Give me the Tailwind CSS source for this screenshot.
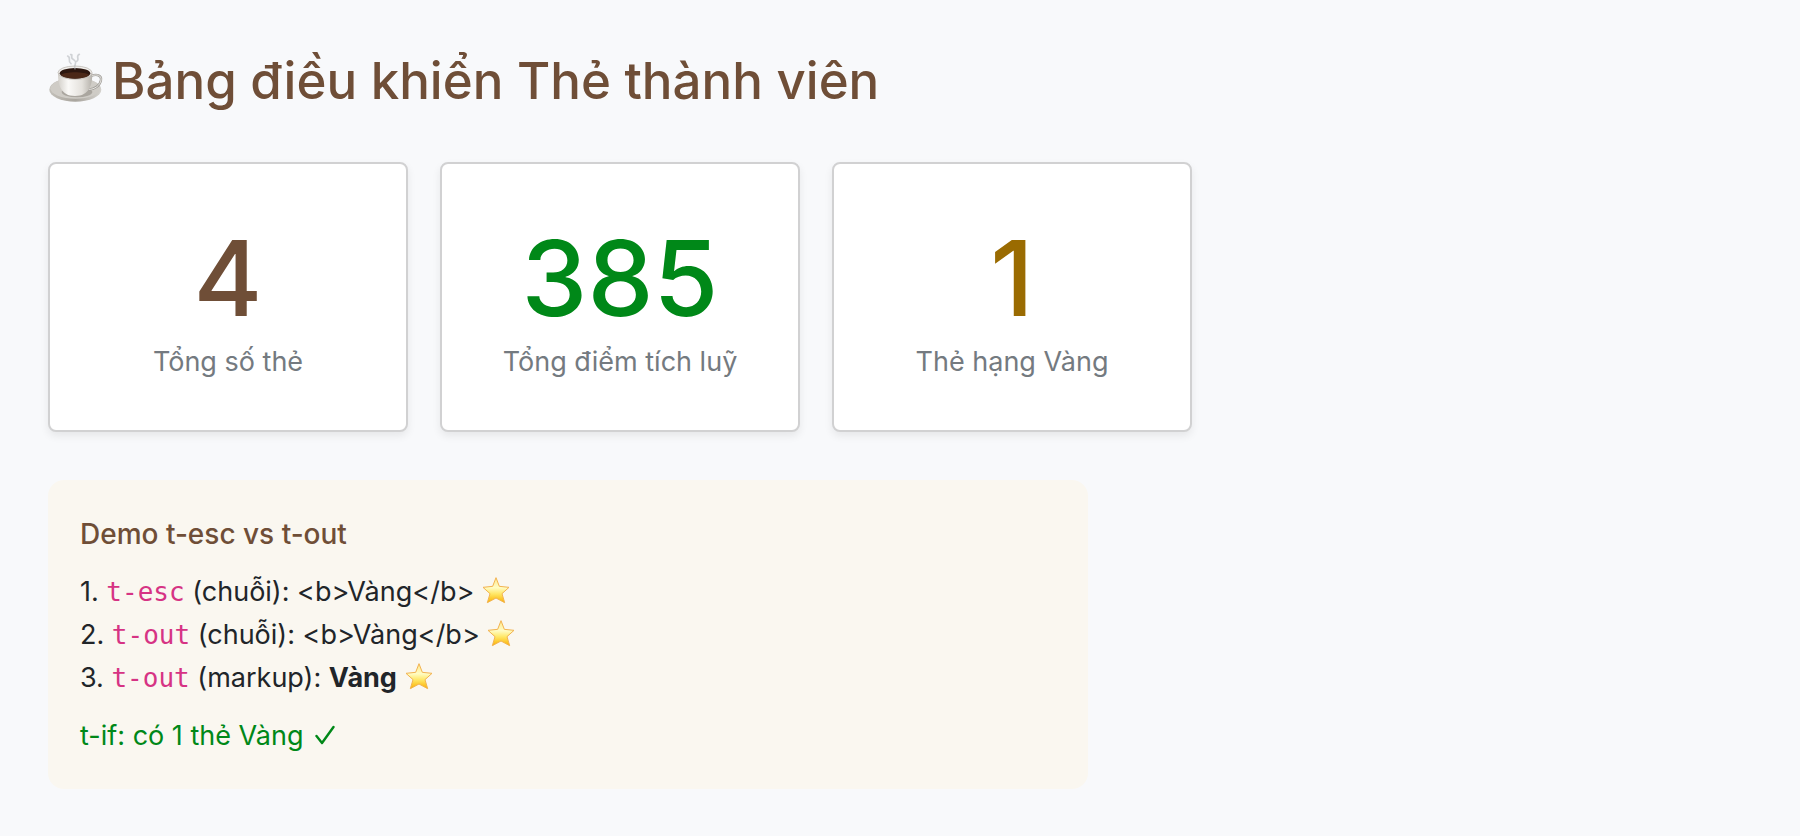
<!DOCTYPE html>
<html lang="vi">
<head>
  <meta charset="UTF-8">
  <meta name="viewport" content="width=device-width, initial-scale=1.0">
  <title>Bảng điều khiển Thẻ thành viên</title>
  <script src="https://cdn.jsdelivr.net/npm/@tailwindcss/browser@4"></script>
</head>
<body class="min-h-screen bg-[#f8f9fb] p-12 font-['Inter','Noto_Sans',sans-serif] text-[27px] text-[#212529]">

  <!-- Shared symbols -->
  <svg class="absolute h-0 w-0" aria-hidden="true">
    <defs>
      <linearGradient id="starFill" x1="0" y1="0" x2="0" y2="1">
        <stop offset="0" stop-color="#ffe88a" />
        <stop offset="0.4" stop-color="#fffcc4" />
        <stop offset="0.65" stop-color="#ffe765" />
        <stop offset="1" stop-color="#fbb000" />
      </linearGradient>
    </defs>
    <symbol id="star" viewBox="0 0 84 84">
      <path d="M42 5 L52 31 L81 34 L60 53 L68 80 L42 66 L16 80 L24 53 L3 34 L32 31 Z" fill="url(#starFill)" stroke="#f2b350" stroke-width="3" stroke-linejoin="round" />
    </symbol>
  </svg>

  <header class="mb-12">
    <h1 class="flex items-center gap-2 text-[51px] leading-[66px] font-medium text-[#6f4e37]">
      <svg class="h-14 w-14 shrink-0" viewBox="53 37 168 168" role="img" aria-label="Cà phê">
        <defs>
          <linearGradient id="cupBody" x1="0" y1="0" x2="1" y2="0">
            <stop offset="0" stop-color="#d3d0ca" />
            <stop offset="0.3" stop-color="#faf9f7" />
            <stop offset="0.7" stop-color="#e4e1dc" />
            <stop offset="1" stop-color="#b5b1aa" />
          </linearGradient>
          <linearGradient id="saucer" x1="0" y1="0" x2="1" y2="0">
            <stop offset="0" stop-color="#c3c0b9" />
            <stop offset="0.5" stop-color="#a9a59e" />
            <stop offset="1" stop-color="#d5d3ce" />
          </linearGradient>
        </defs>
        <ellipse cx="135" cy="147" rx="78" ry="36" fill="url(#saucer)" />
        <ellipse cx="135" cy="143" rx="75" ry="31" fill="#cfccc6" />
        <ellipse cx="140" cy="154" rx="46" ry="16" fill="#aaa69f" />
        <path d="M182 106 C200 99 214 104 212 118 C210 134 192 147 175 146" fill="none" stroke="#a19e99" stroke-width="7" />
        <path d="M182 106 C200 99 214 104 212 118 C210 134 192 147 175 146" fill="none" stroke="#e8e6e2" stroke-width="3" />
        <path d="M83 97 C83 132 91 166 134 166 C177 166 186 132 186 97 Z" fill="url(#cupBody)" />
        <ellipse cx="134" cy="96" rx="51" ry="20" fill="#f1efec" stroke="#b3afa8" stroke-width="2" />
        <ellipse cx="134" cy="98" rx="46" ry="16" fill="#2c1710" />
        <path d="M92 103 C103 92 165 92 176 103 C165 117 103 117 92 103 Z" fill="#4b2818" />
        <path d="M134 84 C129 70 145 66 128 56 C118 50 130 40 121 42 M122 69 C110 60 124 51 112 46 M139 62 C150 55 134 48 147 41" fill="none" stroke="#b5b9be" stroke-opacity="0.6" stroke-width="5" stroke-linecap="round" />
      </svg>
      Bảng điều khiển Thẻ thành viên
    </h1>
  </header>

  <main>
    <section class="mb-12 grid max-w-[1144px] grid-cols-3 gap-8 text-center">
      <div class="rounded-lg border-2 border-[#d1d1d2] bg-white px-4 pt-12 pb-[50px] shadow-[0_4px_8px_rgba(0,0,0,0.075)]">
        <div class="text-[105px] leading-[132px] font-medium text-[#6f4e37]">4</div>
        <div class="leading-9 text-[#747a80]">Tổng số thẻ</div>
      </div>
      <div class="rounded-lg border-2 border-[#d1d1d2] bg-white px-4 pt-12 pb-[50px] shadow-[0_4px_8px_rgba(0,0,0,0.075)]">
        <div class="text-[105px] leading-[132px] font-medium text-[#008818]">385</div>
        <div class="leading-9 text-[#747a80]">Tổng điểm tích luỹ</div>
      </div>
      <div class="rounded-lg border-2 border-[#d1d1d2] bg-white px-4 pt-12 pb-[50px] shadow-[0_4px_8px_rgba(0,0,0,0.075)]">
        <div class="text-[105px] leading-[132px] font-medium text-[#9a6b01]">1</div>
        <div class="leading-9 text-[#747a80]">Thẻ hạng Vàng</div>
      </div>
    </section>

    <section class="max-w-[1040px] rounded-2xl bg-[#faf7f0] p-8">
      <h2 class="mb-[14px] text-[28px] leading-[44px] font-medium text-[#6f4e37]">Demo t-esc vs t-out</h2>
      <div class="leading-[43px]">
        <p>1. <code class="font-['DejaVu_Sans_Mono',monospace] text-[26px] leading-none text-[#d63384]">t-esc</code> (chuỗi): &lt;b&gt;Vàng&lt;/b&gt; <svg class="inline-block h-7 w-7 align-[-3px]" role="img" aria-label="sao"><use href="#star" /></svg></p>
        <p>2. <code class="font-['DejaVu_Sans_Mono',monospace] text-[26px] leading-none text-[#d63384]">t-out</code> (chuỗi): &lt;b&gt;Vàng&lt;/b&gt; <svg class="inline-block h-7 w-7 align-[-3px]" role="img" aria-label="sao"><use href="#star" /></svg></p>
        <p>3. <code class="font-['DejaVu_Sans_Mono',monospace] text-[26px] leading-none text-[#d63384]">t-out</code> (markup): <b>Vàng</b> <svg class="inline-block h-7 w-7 align-[-3px]" role="img" aria-label="sao"><use href="#star" /></svg></p>
      </div>
      <p class="mt-4 leading-[42px] text-[#008818]">t-if: có 1 thẻ Vàng <svg class="ml-1 inline-block h-5 w-5 align-baseline" viewBox="0 0 20 20" fill="none" stroke="currentColor" stroke-width="2.4" stroke-linecap="round" stroke-linejoin="round" role="img" aria-label="đúng"><path d="M1.5 11 L7 18 L18.5 2" /></svg></p>
    </section>
  </main>

</body>
</html>
